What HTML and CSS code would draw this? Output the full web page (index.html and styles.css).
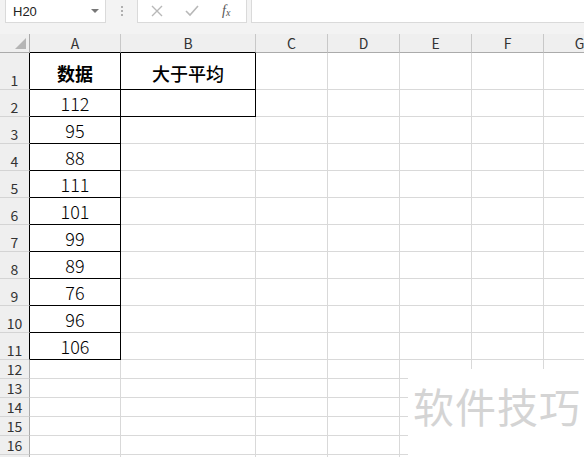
FILE: index.html
```html
<!DOCTYPE html>
<html>
<head>
<meta charset="utf-8">
<link rel="stylesheet" href="styles.css">
</head>
<body>
<div class="app">
  <div class="toolbar">
    <div class="namebox"><span>H20</span><span class="drop"></span></div>
    <div class="dots"><i></i><i></i><i></i></div>
    <div class="fbtns">
      <svg class="ico" width="14" height="14" viewBox="0 0 14 14"><path d="M2 2 L12 12 M12 2 L2 12" stroke="#b8b8b8" stroke-width="1.4" fill="none"/></svg>
      <svg class="ico" width="16" height="14" viewBox="0 0 16 14"><path d="M2 7 L6 11 L14 2" stroke="#b8b8b8" stroke-width="1.6" fill="none"/></svg>
      <span class="fx">f<sub>x</sub></span>
    </div>
    <div class="finput"></div>
  </div>
  <div class="sheet">
    <div class="hd corner"><span class="tri"></span></div>
    <div class="hd col b-bot">A</div>
    <div class="hd col b-bot">B</div>
    <div class="hd col">C</div>
    <div class="hd col">D</div>
    <div class="hd col">E</div>
    <div class="hd col">F</div>
    <div class="hd col">G</div>

    <div class="hd row b-rt">1</div>
    <div class="c bk cn bold">数据</div>
    <div class="c bk cn med">大于平均</div>
    <div class="c"></div><div class="c"></div><div class="c"></div><div class="c"></div><div class="c"></div>

    <div class="hd row b-rt">2</div>
    <div class="c bk num">112</div>
    <div class="c bk"></div>
    <div class="c"></div><div class="c"></div><div class="c"></div><div class="c"></div><div class="c"></div>

    <div class="hd row b-rt">3</div>
    <div class="c bk num">95</div>
    <div class="c"></div><div class="c"></div><div class="c"></div><div class="c"></div><div class="c"></div><div class="c"></div>

    <div class="hd row b-rt">4</div>
    <div class="c bk num">88</div>
    <div class="c"></div><div class="c"></div><div class="c"></div><div class="c"></div><div class="c"></div><div class="c"></div>

    <div class="hd row b-rt">5</div>
    <div class="c bk num">111</div>
    <div class="c"></div><div class="c"></div><div class="c"></div><div class="c"></div><div class="c"></div><div class="c"></div>

    <div class="hd row b-rt">6</div>
    <div class="c bk num">101</div>
    <div class="c"></div><div class="c"></div><div class="c"></div><div class="c"></div><div class="c"></div><div class="c"></div>

    <div class="hd row b-rt">7</div>
    <div class="c bk num">99</div>
    <div class="c"></div><div class="c"></div><div class="c"></div><div class="c"></div><div class="c"></div><div class="c"></div>

    <div class="hd row b-rt">8</div>
    <div class="c bk num">89</div>
    <div class="c"></div><div class="c"></div><div class="c"></div><div class="c"></div><div class="c"></div><div class="c"></div>

    <div class="hd row b-rt">9</div>
    <div class="c bk num">76</div>
    <div class="c"></div><div class="c"></div><div class="c"></div><div class="c"></div><div class="c"></div><div class="c"></div>

    <div class="hd row b-rt">10</div>
    <div class="c bk num">96</div>
    <div class="c"></div><div class="c"></div><div class="c"></div><div class="c"></div><div class="c"></div><div class="c"></div>

    <div class="hd row b-rt">11</div>
    <div class="c bk num">106</div>
    <div class="c"></div><div class="c"></div><div class="c"></div><div class="c"></div><div class="c"></div><div class="c"></div>

    <div class="hd row">12</div>
    <div class="c"></div><div class="c"></div><div class="c"></div><div class="c"></div><div class="c"></div><div class="c"></div><div class="c"></div>

    <div class="hd row">13</div>
    <div class="c"></div><div class="c"></div><div class="c"></div><div class="c"></div><div class="c"></div><div class="c"></div><div class="c"></div>

    <div class="hd row">14</div>
    <div class="c"></div><div class="c"></div><div class="c"></div><div class="c"></div><div class="c"></div><div class="c"></div><div class="c"></div>

    <div class="hd row">15</div>
    <div class="c"></div><div class="c"></div><div class="c"></div><div class="c"></div><div class="c"></div><div class="c"></div><div class="c"></div>

    <div class="hd row">16</div>
    <div class="c"></div><div class="c"></div><div class="c"></div><div class="c"></div><div class="c"></div><div class="c"></div><div class="c"></div>

    <div class="hd row"></div>
    <div class="c"></div><div class="c"></div><div class="c"></div><div class="c"></div><div class="c"></div><div class="c"></div><div class="c"></div>
  </div>
  <div class="watermark">软件技巧</div>
</div>
</body>
</html>
```

FILE: styles.css
```css
html, body {
  margin: 0;
  padding: 0;
  background: #ffffff;
  overflow: hidden;
}
.app {
  position: relative;
  width: 584px;
  height: 457px;
  overflow: hidden;
  font-family: "Noto Sans CJK SC", "Noto Sans", sans-serif;
}
.toolbar {
  height: 34px;
  background: #f3f3f3;
  display: flex;
  align-items: flex-start;
  box-sizing: border-box;
}
.namebox {
  margin-left: 5px;
  width: 101px;
  height: 23px;
  background: #fff;
  border: 1px solid #dadada;
  border-top: none;
  box-sizing: border-box;
  display: flex;
  align-items: center;
  justify-content: space-between;
  padding: 0 6px 0 7px;
  font-family: "Liberation Sans", Arial, sans-serif;
  font-size: 13px;
  color: #222;
}
.drop {
  width: 0;
  height: 0;
  border-left: 4px solid transparent;
  border-right: 4px solid transparent;
  border-top: 4px solid #777;
}
.dots {
  width: 31px;
  height: 22px;
  display: flex;
  flex-direction: column;
  align-items: center;
  justify-content: center;
  gap: 2px;
}
.dots i {
  width: 2px;
  height: 2px;
  background: #b0b0b0;
  display: block;
}
.fbtns {
  width: 110px;
  height: 23px;
  background: #fff;
  border: 1px solid #dadada;
  border-top: none;
  box-sizing: border-box;
  display: flex;
  align-items: center;
  padding-left: 12px;
  gap: 20px;
}
.fx {
  font-family: "Liberation Serif", "Times New Roman", serif;
  font-style: italic;
  font-size: 14px;
  color: #555;
  margin-left: 2px;
}
.fx sub {
  font-size: 10px;
  vertical-align: -1px;
}
.finput {
  margin-left: 4px;
  flex: 1;
  height: 23px;
  background: #fff;
  border: 1px solid #dadada;
  border-top: none;
  border-right: none;
  box-sizing: border-box;
}
.sheet {
  display: grid;
  grid-template-columns: 30px 91px 135px 72px 72px 72px 72px 72px;
  grid-template-rows: 19px 37px repeat(10, 27px) repeat(6, 19px);
}
.hd {
  background: #efefef;
  box-sizing: border-box;
  border-right: 1px solid #c8c8c8;
  border-bottom: 1px solid #c8c8c8;
  color: #333;
  font-size: 14px;
  display: flex;
  justify-content: center;
  line-height: 1;
}
.hd.col {
  align-items: center;
  border-bottom-color: #ababab;
}
.hd.corner {
  position: relative;
  border-bottom-color: #ababab;
  border-right-color: #ababab;
}
.tri {
  position: absolute;
  right: 3px;
  bottom: 3px;
  width: 0;
  height: 0;
  border-left: 11px solid transparent;
  border-bottom: 11px solid #b5b5b5;
}
.hd.row {
  align-items: flex-end;
  padding-bottom: 2px;
  border-right-color: #ababab;
  border-bottom-color: #d4d4d4;
}
.hd.b-rt {
  border-right-color: #000;
}
.hd.col.b-bot {
  border-bottom-color: #000;
}
.c {
  box-sizing: border-box;
  border-right: 1px solid #d9d9d9;
  border-bottom: 1px solid #d9d9d9;
  display: flex;
  justify-content: center;
  align-items: flex-end;
  color: #000;
  line-height: 1;
}
.c.bk {
  border-right-color: #000;
  border-bottom-color: #000;
}
.num {
  font-size: 18px;
  font-weight: 300;
  padding-bottom: 4px;
}
.cn {
  font-size: 18px;
  padding-bottom: 7px;
}
.bold {
  font-weight: bold;
}
.med {
  font-weight: 500;
}
.watermark {
  position: absolute;
  left: 408px;
  top: 369px;
  width: 176px;
  height: 88px;
  background: #fff;
  color: #d4d4d4;
  font-size: 41px;
  line-height: 1;
  padding: 16px 0 0 5px;
  box-sizing: border-box;
  letter-spacing: 1px;
  white-space: nowrap;
}
```
